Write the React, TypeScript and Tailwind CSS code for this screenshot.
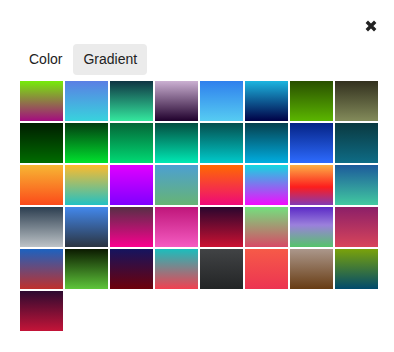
import React from "react";

const gradients: string[] = [
  "linear-gradient(to bottom, #76ec0a, #a50b80)",
  "linear-gradient(to bottom, #5a7fe4, #38d3dd)",
  "linear-gradient(to bottom, #0f3443, #34e89e)",
  "linear-gradient(to bottom, #cbb0d2, #20002c)",
  "linear-gradient(to bottom, #2f80ed, #56ccf2)",
  "linear-gradient(to bottom, #1cb5e0, #000046)",
  "linear-gradient(to bottom, #294f00, #5bb600)",
  "linear-gradient(to bottom, #32301e, #838b5a)",

  "linear-gradient(to bottom, #001d00, #006c00)",
  "linear-gradient(to bottom, #023c10, #00e22e)",
  "linear-gradient(to bottom, #046637, #00da74)",
  "linear-gradient(to bottom, #034d40, #00e9b4)",
  "linear-gradient(to bottom, #044e4e, #00cbcb)",
  "linear-gradient(to bottom, #053f4d, #00aee0)",
  "linear-gradient(to bottom, #052385, #2d6bff)",
  "linear-gradient(to bottom, #0a3940, #0e6c86)",

  "linear-gradient(to bottom, #f7b733, #fc4a1a)",
  "linear-gradient(to bottom, #fdbb2d, #22c1c3)",
  "linear-gradient(to bottom, #e100ff, #7f00ff)",
  "linear-gradient(to bottom, #4ca0d2, #67b474)",
  "linear-gradient(to bottom, #ff6a00, #ee0979)",
  "linear-gradient(to bottom, #12d8e0, #f20cfd)",
  "linear-gradient(to bottom, #fcb045, #fd1d1d 55%, #833ab4)",
  "linear-gradient(to bottom, #1c5a9b, #42c9a0)",

  "linear-gradient(to bottom, #2c3e50, #bdc3c7)",
  "linear-gradient(to bottom, #4388ec, #2b3440)",
  "linear-gradient(to bottom, #562f45, #fa008f)",
  "linear-gradient(to bottom, #bf167a, #f55cc2)",
  "linear-gradient(to bottom, #2a062e, #cb1132)",
  "linear-gradient(to bottom, #74e07e, #d84a66)",
  "linear-gradient(to bottom, #5b2ac6, #9b80dc 45%, #56c46a)",
  "linear-gradient(to bottom, #8c1f68, #d8455a)",

  "linear-gradient(to bottom, #1c62c0, #c0302c)",
  "linear-gradient(to bottom, #0b1a00, #5ec53a)",
  "linear-gradient(to bottom, #15145f, #6e000a)",
  "linear-gradient(to bottom, #1bbebd, #f24050)",
  "linear-gradient(to bottom, #414345, #232526)",
  "linear-gradient(to bottom, #f65a48, #ec3452)",
  "linear-gradient(to bottom, #ab978b, #683c13)",
  "linear-gradient(to bottom, #7aa20a, #004a6c)",

  "linear-gradient(to bottom, #2d0a30, #c41438)",
];

export default function App() {
  return (
    <div
      className="w-[394px] h-[352px] bg-white flex flex-col"
      style={{ fontFamily: '"Liberation Sans", Arial, sans-serif' }}
    >
      <div className="flex justify-end pt-[20px] pr-[17px]">
        <svg width="12" height="12" viewBox="0 0 12 12" className="block">
          <path
            d="M1.8 1.8 L10.2 10.2 M10.2 1.8 L1.8 10.2"
            stroke="#222"
            strokeWidth="3.4"
            strokeLinecap="butt"
          />
        </svg>
      </div>
      <div className="flex items-center pl-[19px] mt-[12px] gap-[1px]">
        <div className="h-[31px] px-[10px] flex items-center text-[14px] text-[#222]">
          Color
        </div>
        <div className="h-[31px] px-[10px] flex items-center text-[14px] text-[#222] bg-[#ebebeb] rounded-[4px]">
          Gradient
        </div>
      </div>
      <div className="mt-[6px] pl-[20px] grid grid-cols-[repeat(8,43px)] gap-[2px]">
        {gradients.map((g, i) => (
          <div key={i} className="h-[40px]" style={{ backgroundImage: g }} />
        ))}
      </div>
    </div>
  );
}
